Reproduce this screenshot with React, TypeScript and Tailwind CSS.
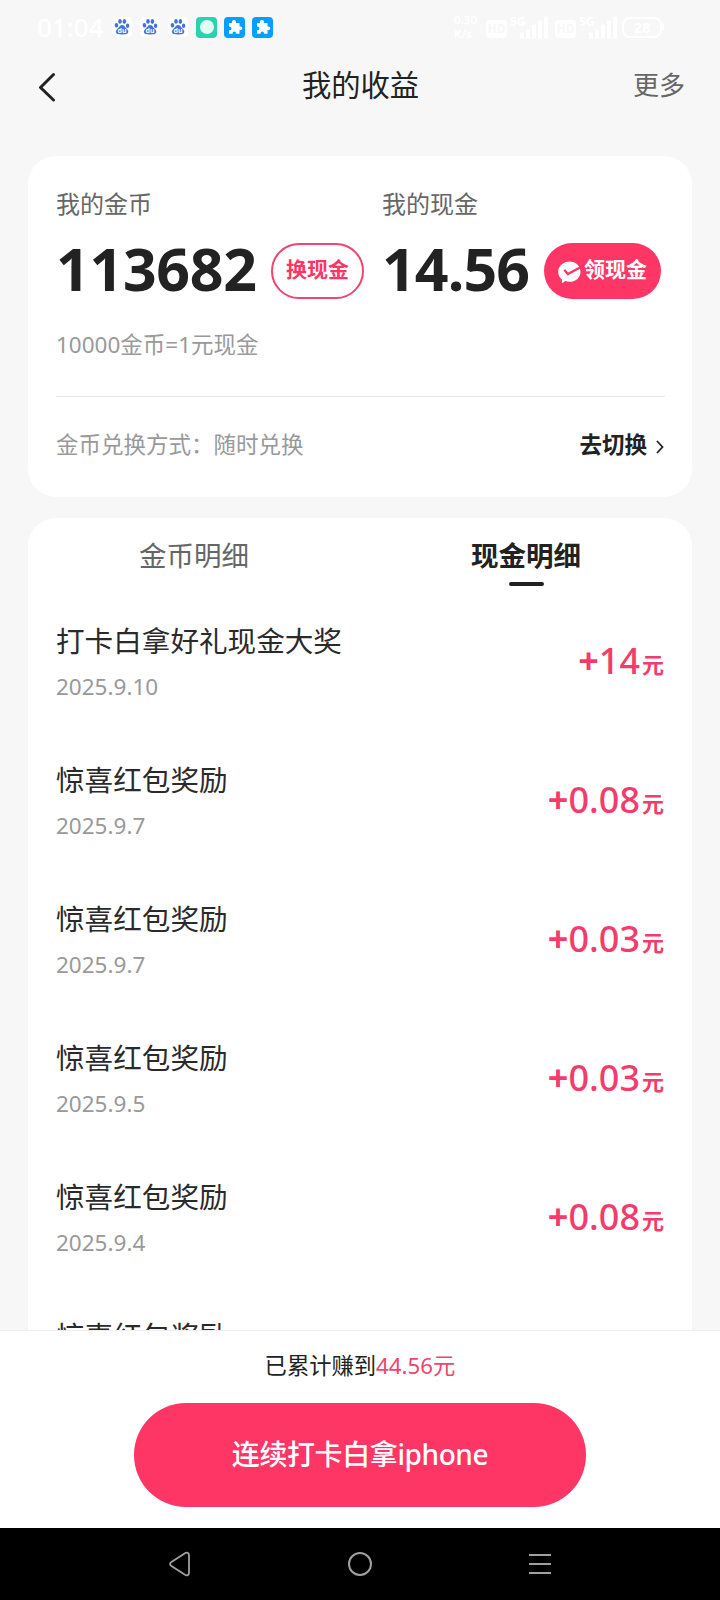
import { useState } from 'react';

type DetailTab = 'coin' | 'cash';

interface CashRecord {
  title: string;
  date: string;
  amount: string;
}

const records: CashRecord[] = [
  { title: '打卡白拿好礼现金大奖', date: '2025.9.10', amount: '14' },
  { title: '惊喜红包奖励', date: '2025.9.7', amount: '0.08' },
  { title: '惊喜红包奖励', date: '2025.9.7', amount: '0.03' },
  { title: '惊喜红包奖励', date: '2025.9.5', amount: '0.03' },
  { title: '惊喜红包奖励', date: '2025.9.4', amount: '0.08' },
  { title: '惊喜红包奖励', date: '', amount: '' },
];

const tabs: { id: DetailTab; label: string }[] = [
  { id: 'coin', label: '金币明细' },
  { id: 'cash', label: '现金明细' },
];

function BaiduIcon() {
  return (
    <svg viewBox="0 0 20 20" className="h-5 w-5">
      <rect width="20" height="20" rx="4" fill="#fff" />
      <g fill="#4672dc">
        <ellipse cx="4.5" cy="8.3" rx="1.8" ry="2.3" transform="rotate(-12 4.5 8.3)" />
        <ellipse cx="8" cy="4.4" rx="1.8" ry="2.4" />
        <ellipse cx="12.4" cy="4.5" rx="1.8" ry="2.4" transform="rotate(10 12.4 4.5)" />
        <ellipse cx="15.6" cy="8.8" rx="1.7" ry="2.3" />
        <path d="M10.200 8c2 0 2.600 1.900 4 3.300 1.500 1.500 2.500 2.600 2 4.200-.6 1.900-2.800 1.900-6 1.900s-5.600.1-6.200-1.900c-.5-1.700.5-2.800 2-4.200C7.500 9.900 8.200 8 10.200 8z" />
      </g>
      <text x="10.1" y="16" textAnchor="middle" fontSize="7" fontWeight="700" fill="#fff">du</text>
    </svg>
  );
}

function BubbleIcon() {
  return (
    <div className="flex h-[21px] w-[21px] items-center justify-center rounded-[4px] bg-[#2bd2b0]">
      <div className="h-[14px] w-[14px] rounded-full bg-[#e3faf3]" />
    </div>
  );
}

function PuzzleIcon() {
  return (
    <svg viewBox="0 0 21 21" className="h-[21px] w-[21px]">
      <rect width="21" height="21" rx="4" fill="#079ffb" />
      <path
        d="M5 6h3.200C7.600 4.300 8.500 3 10 3s2.400 1.300 1.800 3H15.500v3.600c1.700-.5 2.700.4 2.700 1.700s-1 2.200-2.700 1.700v3.800h-3.600c.4-1.500-.4-2.400-1.600-2.400s-2 .9-1.600 2.400H5v-3.600c1.600.4 2.400-.4 2.400-1.600S6.600 9.200 5 9.600z"
        fill="#fff"
      />
    </svg>
  );
}

function Signal() {
  return (
    <div className="flex h-[23px] items-start">
      <span className="w-[18px] text-[12px] leading-[12px] font-bold">5G</span>
      <svg viewBox="0 0 28 22" className="-ml-[8px] h-[23px] w-[28px]" fill="#fff">
        <rect x="0" y="16" width="4" height="6" />
        <rect x="6" y="13" width="4" height="9" />
        <rect x="12" y="8" width="4" height="14" />
        <rect x="18" y="4" width="4" height="18" />
        <rect x="24" y="0" width="4" height="22" />
      </svg>
    </div>
  );
}

function HdBadge() {
  return (
    <span className="mt-[4px] flex h-[18px] w-[21px] items-center justify-center rounded-[4px] bg-white text-[12px] font-bold text-[#f7f7f7]">
      HD
    </span>
  );
}

function StatusBar() {
  return (
    <div className="flex h-[54px] shrink-0 items-center justify-between pr-[56px] pl-[37px] text-white">
      <div className="flex items-center">
        <span className="w-[75px] text-[26px] leading-[26px] font-medium">01:04</span>
        <div className="flex items-center gap-[8px]">
          <BaiduIcon />
          <BaiduIcon />
          <BaiduIcon />
        </div>
        <div className="ml-[8px] flex items-center gap-[7px]">
          <BubbleIcon />
          <PuzzleIcon />
          <PuzzleIcon />
        </div>
      </div>
      <div className="flex items-center">
        <div className="mr-[9px] flex flex-col text-[11.5px] leading-[16px] font-semibold">
          <span>0.30</span>
          <span className="-mt-[2px]">K/s</span>
        </div>
        <HdBadge />
        <div className="mr-[7px] ml-[3px]">
          <Signal />
        </div>
        <HdBadge />
        <div className="mr-[5px] ml-[3px]">
          <Signal />
        </div>
        <div className="flex h-[21px] w-[40px] items-center justify-center rounded-[8px] border-2 border-white text-[15px] leading-none font-bold">
          28
        </div>
        <div className="h-[8px] w-[2px] rounded-r bg-white" />
      </div>
    </div>
  );
}

function Header() {
  return (
    <div className="grid h-[102px] shrink-0 grid-cols-3 items-start pr-[35px] pl-[36px]">
      <button className="flex h-[64px] items-center">
        <svg viewBox="0 0 20 30" className="mt-[1px] h-[30px] w-[20px]" fill="none" stroke="#222" strokeWidth="3" strokeLinecap="round" strokeLinejoin="round">
          <path d="M17.500 2.500 4.500 15.500l13 12.500" />
        </svg>
      </button>
      <h1 className="text-center text-[29.300px] leading-[63px] whitespace-nowrap text-[#222]">我的收益</h1>
      <button className="text-right text-[26px] leading-[63px] text-[#666]">更多</button>
    </div>
  );
}

function BalanceCard() {
  return (
    <div className="h-[341px] shrink-0 rounded-[28px] bg-white px-[28px] pt-[30px]">
      <div className="flex">
        <div className="w-[326px]">
          <div className="text-[24px] leading-[36px] text-[#666]">我的金币</div>
          <div className="mt-[21px] flex h-[56px] items-center">
            <span className="-mt-[6px] w-[215px] text-[59px] leading-[56px] font-bold tracking-[-0.3px] text-[#222]">113682</span>
            <button className="h-[56px] w-[93px] rounded-full border-2 border-[#f04472] pb-[3px] text-[21px] font-bold text-[#fe3666]">
              换现金
            </button>
          </div>
        </div>
        <div className="flex-1">
          <div className="text-[24px] leading-[36px] text-[#666]">我的现金</div>
          <div className="mt-[21px] flex h-[56px] items-center">
            <span className="-mt-[6px] w-[162px] text-[59px] leading-[56px] font-bold tracking-[-0.9px] text-[#222]">14.56</span>
            <button className="flex h-[56px] w-[117px] items-center rounded-full bg-[#fe3666] pl-[13px] text-[21px] font-bold whitespace-nowrap text-white">
              <svg viewBox="0 0 24 24" className="mt-[2px] mr-[3px] h-[24px] w-[24px] shrink-0">
                <path d="M12.600 1.500c6.200 0 10.900 4.400 10.900 10.200s-4.700 10.100-10.900 10.100c-1.600 0-2.900-.2-4.200-.7l-3.500 2.200.1-3.800C2.600 17.700 1.200 15 1.200 11.700 1.200 5.900 6.400 1.500 12.600 1.500z" fill="#fff" />
                <path d="M7.300 9.800 10.800 14 23.500 7.200" fill="none" stroke="#fe3666" strokeWidth="2.200" />
              </svg>
              <span className="-mt-[3px]">领现金</span>
            </button>
          </div>
        </div>
      </div>
      <div className="mt-[28px] text-[22.500px] leading-[36px] text-[#999]">10000金币=1元现金</div>
      <div className="mt-[33px] -mr-px h-px bg-[#e6e6e6]" />
      <div className="-mr-px flex items-center justify-between pt-[30px] leading-[36px]">
        <span className="text-[22.500px] text-[#999]">金币兑换方式：随时兑换</span>
        <span className="flex items-center text-[22.500px] font-bold text-[#222]">
          去切换
          <svg viewBox="0 0 10 16" className="mt-[4px] ml-[8px] h-[16px] w-[10px]" fill="none" stroke="#222" strokeWidth="1.800">
            <path d="m2 2 5.500 6L2 14" />
          </svg>
        </span>
      </div>
    </div>
  );
}

function RecordRow({ record }: { record: CashRecord }) {
  return (
    <div className="flex h-[139px] justify-between">
      <div>
        <div className="text-[28.600px] leading-[44px] text-[#2a2a2a]">{record.title}</div>
        <div className="mt-[8px] text-[22.500px] leading-[32px] text-[#999]">{record.date}</div>
      </div>
      {record.amount && (
        <div className="mt-[16px] flex text-[36px] leading-[52px] font-medium text-[#f23d6c]">
          <span className="font-bold">+</span>
          <span>{record.amount}</span>
          <span className="mt-[2px] ml-[2px] text-[22px] leading-[54px] font-bold">元</span>
        </div>
      )}
    </div>
  );
}

export default function App() {
  const [activeTab, setActiveTab] = useState<DetailTab>('cash');

  return (
    <div className="flex h-[1600px] w-[720px] flex-col overflow-hidden bg-[#f7f7f7] font-['Noto_Sans','Noto_Sans_CJK_SC',sans-serif]">
      <StatusBar />
      <Header />

      {/* Scrolling content */}
      <div className="flex min-h-0 flex-1 flex-col gap-[21px] overflow-hidden px-[28px]">
        <BalanceCard />
        <div className="shrink-0 rounded-t-[28px] bg-white">
          <div className="grid h-[101px] grid-cols-2">
            {tabs.map((tab) => (
              <button
                key={tab.id}
                onClick={() => setActiveTab(tab.id)}
                className={`flex flex-col items-center pt-[18px] text-[27.500px] leading-[40px] ${
                  activeTab === tab.id ? 'font-bold text-[#222]' : 'text-[#666]'
                }`}
              >
                {tab.label}
                {activeTab === tab.id && <span className="mt-[6px] h-[4px] w-[35px] rounded-full bg-[#222]" />}
              </button>
            ))}
          </div>
          <div className="px-[28px]">
            {records.map((record, i) => (
              <RecordRow key={i} record={record} />
            ))}
          </div>
        </div>
      </div>

      {/* Bottom action */}
      <div className="flex h-[198px] shrink-0 flex-col items-center border-t border-[#eee] bg-white pt-[18px]">
        <div className="text-[22.300px] leading-[34px] text-[#222]">
          已累计赚到<span className="text-[#f04472]">44.56元</span>
        </div>
        <button className="mt-[20px] h-[104px] w-[452px] rounded-full bg-[#fe3666] pb-[2px] text-[28px] font-medium tracking-[-0.4px] text-white">
          连续打卡白拿iphone
        </button>
      </div>

      {/* System navigation */}
      <div className="flex h-[72px] shrink-0 items-center justify-between bg-black px-[168px]">
        <svg viewBox="0 0 24 26" className="h-[26px] w-[24px]" fill="none" stroke="#a0a0a0" strokeWidth="1.800">
          <path d="M3.400 11.100 17 2.300c2-1.200 4-.5 4 2v17.400c0 2.500-2 3.200-4 2L3.400 14.900c-1.800-1.200-1.800-2.600 0-3.800z" />
        </svg>
        <div className="h-[24px] w-[24px] rounded-full border-2 border-[#a0a0a0]" />
        <div className="flex w-[24px] flex-col items-center gap-[7px]">
          <span className="h-[2px] w-[22px] bg-[#a0a0a0]" />
          <span className="h-[2px] w-[22px] bg-[#a0a0a0]" />
          <span className="h-[2px] w-[22px] bg-[#a0a0a0]" />
        </div>
      </div>
    </div>
  );
}
